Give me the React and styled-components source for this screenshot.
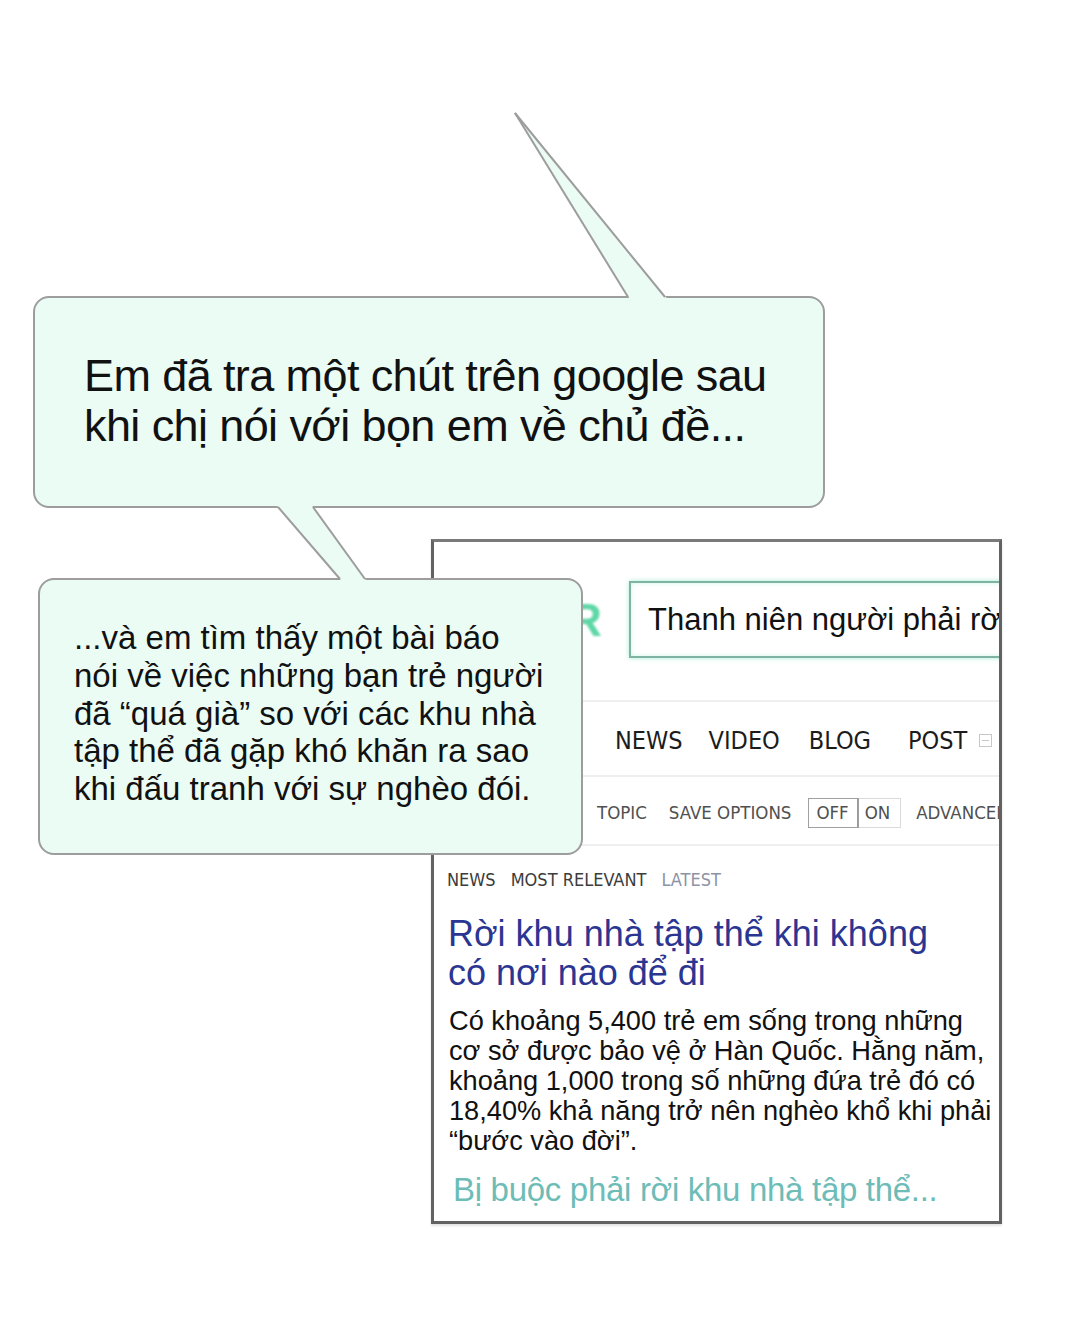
import React from 'react';
import styled, { createGlobalStyle } from 'styled-components';

const GlobalStyle = createGlobalStyle`
  body {
    margin: 0;
    background: #ffffff;
    font-family: "Liberation Sans", Arial, sans-serif;
  }
`;

const MINT = '#ebfcf4';
const LINE = '#9d9d9d';

const Page = styled.div`
  position: relative;
  width: 1080px;
  height: 1340px;
  box-sizing: border-box;
  padding-top: 296px;
  display: flex;
  flex-direction: column;
  background: #fff;
  overflow: hidden;
`;

const Bubble = styled.div`
  box-sizing: border-box;
  background: ${MINT};
  border: 2px solid ${LINE};
  border-radius: 16px;
  color: #111;
`;

const BigBubble = styled(Bubble)`
  margin-left: 33px;
  width: 792px;
  height: 212px;
  padding: 53px 0 0 49px;
`;

const BigText = styled.p`
  margin: 0;
  font-size: 45px;
  line-height: 50px;
  letter-spacing: -0.6px;
`;

const SmallBubble = styled(Bubble)`
  position: absolute;
  left: 38px;
  top: 578px;
  width: 545px;
  height: 277px;
  padding: 39px 0 0 34px;
`;

const SmallText = styled.p`
  margin: 0;
  font-size: 33px;
  line-height: 37.8px;
`;

const Tail = styled.svg`
  position: absolute;
  left: ${p => p.$x}px;
  top: ${p => p.$y}px;
  overflow: visible;
`;

const Browser = styled.div`
  box-sizing: border-box;
  margin: 31px 0 0 431px;
  width: 571px;
  height: 685px;
  border: 3px solid #626262;
  border-top-color: #7a7a7a;
  background: #fff;
  overflow: hidden;
  box-shadow: 0 2px 2px #e4e4e4;
`;

const Header = styled.div`
  height: 160px;
  box-sizing: border-box;
  padding-top: 39px;
  display: flex;
  align-items: flex-start;
  border-bottom: 2px solid #efefef;
`;

const HeaderInner = styled.div`
  display: flex;
  align-items: center;
`;

const Logo = styled.div`
  width: 168px;
  margin-right: 27px;
  text-align: right;
  font-size: 46px;
  font-weight: bold;
  color: #5fd7a7;
  filter: blur(0.8px);
`;

const Search = styled.div`
  flex-shrink: 0;
  box-sizing: border-box;
  width: 420px;
  height: 77px;
  border: 2px solid #7fb3a3;
  box-shadow: 0 0 5px #a9ecd4, inset 0 0 4px #c9f5e4;
  display: flex;
  align-items: center;
  padding-left: 17px;
  font-size: 31px;
  color: #111;
  white-space: nowrap;
`;

const Row = styled.div`
  display: flex;
  align-items: center;
  box-sizing: border-box;
  height: ${p => p.$h}px;
  padding-left: ${p => p.$pad}px;
  padding-top: 4px;
  border-bottom: ${p => (p.$line ? '2px solid #efefef' : 'none')};
  font-family: "Liberation Sans Narrow", "DejaVu Sans Condensed", sans-serif;
  white-space: nowrap;
`;

const NavItem = styled.span`
  font-size: 25px;
  color: #1c1c1c;
  margin-right: ${p => p.$gap}px;
`;

const PlusBox = styled.span`
  flex-shrink: 0;
  display: inline-block;
  width: 11px;
  height: 11px;
  border: 1px solid #c8c8c8;
  position: relative;
  &::after {
    content: '';
    position: absolute;
    left: 2px;
    right: 2px;
    top: 5px;
    height: 1px;
    background: #c8c8c8;
  }
`;

const Option = styled.span`
  font-size: 18.5px;
  color: #505050;
  margin-right: ${p => p.$gap}px;
`;

const Toggle = styled.div`
  display: flex;
  height: 28px;
  border: 1px solid #dadada;
  margin-right: 15px;
`;

const ToggleBtn = styled.span`
  display: flex;
  align-items: center;
  padding: 0 ${p => (p.$on ? 8 : 10)}px 0 7px;
  font-size: 18.5px;
  color: #505050;
  border-right: ${p => (p.$on ? '1px solid #9a9a9a' : 'none')};
  outline: ${p => (p.$on ? '1px solid #a0a0a0' : 'none')};
`;

const Results = styled.div`
  padding: 18px 0 0 13px;
`;

const Tabs = styled.div`
  display: flex;
  height: 30px;
  align-items: center;
  font-family: "Liberation Sans Narrow", "DejaVu Sans Condensed", sans-serif;
  font-size: 18px;
  white-space: nowrap;
`;

const Tab = styled.span`
  color: ${p => (p.$muted ? '#8d93a6' : '#3c3c3c')};
  margin-right: 15px;
`;

const Title = styled.h2`
  margin: 20px 0 0 1px;
  font-weight: normal;
  font-size: 36px;
  line-height: 39px;
  color: #2b3592;
`;

const Body = styled.p`
  margin: 14px 0 0 2px;
  font-size: 27.2px;
  line-height: 30px;
  color: #111;
  white-space: nowrap;
`;

const More = styled.div`
  margin: 16px 0 0 6px;
  font-size: 33px;
  line-height: 36px;
  color: #6dbcb7;
  letter-spacing: -0.3px;
  white-space: nowrap;
`;

export default function App() {
  return (
    <>
      <GlobalStyle />
      <Page>
        <BigBubble>
          <BigText>
            Em đã tra một chút trên google sau
            <br />
            khi chị nói với bọn em về chủ đề...
          </BigText>
        </BigBubble>

        <Browser>
          <Header>
            <HeaderInner>
              <Logo>R</Logo>
              <Search>Thanh niên người phải rời khu nhà tập thể</Search>
            </HeaderInner>
          </Header>

          <Row $h={75} $pad={181} $line>
            <NavItem $gap={26}>NEWS</NavItem>
            <NavItem $gap={29}>VIDEO</NavItem>
            <NavItem $gap={37}>BLOG</NavItem>
            <NavItem $gap={12}>POST</NavItem>
            <PlusBox />
          </Row>

          <Row $h={69} $pad={163} $line>
            <Option $gap={22}>TOPIC</Option>
            <Option $gap={17}>SAVE OPTIONS</Option>
            <Toggle>
              <ToggleBtn $on>OFF</ToggleBtn>
              <ToggleBtn>ON</ToggleBtn>
            </Toggle>
            <Option $gap={0}>ADVANCED</Option>
          </Row>

          <Results>
            <Tabs>
              <Tab>NEWS</Tab>
              <Tab>MOST RELEVANT</Tab>
              <Tab $muted>LATEST</Tab>
            </Tabs>
            <Title>
              Rời khu nhà tập thể khi không
              <br />
              có nơi nào để đi
            </Title>
            <Body>
              Có khoảng 5,400 trẻ em sống trong những
              <br />
              cơ sở được bảo vệ ở Hàn Quốc. Hằng năm,
              <br />
              khoảng 1,000 trong số những đứa trẻ đó có
              <br />
              18,40% khả năng trở nên nghèo khổ khi phải
              <br />
              “bước vào đời”.
            </Body>
            <More>Bị buộc phải rời khu nhà tập thể...</More>
          </Results>
        </Browser>

        <SmallBubble>
          <SmallText>
            ...và em tìm thấy một bài báo
            <br />
            nói về việc những bạn trẻ người
            <br />
            đã “quá già” so với các khu nhà
            <br />
            tập thể đã gặp khó khăn ra sao
            <br />
            khi đấu tranh với sự nghèo đói.
          </SmallText>
        </SmallBubble>

        <Tail $x={505} $y={105} width="170" height="200" viewBox="0 0 170 200">
          <polygon points="10,8 126,196 164,196" fill={MINT} />
          <line x1="10" y1="8" x2="123" y2="192" stroke={LINE} strokeWidth="2" />
          <line x1="10" y1="8" x2="160" y2="192" stroke={LINE} strokeWidth="2" />
        </Tail>

        <Tail $x={270} $y={500} width="105" height="86" viewBox="0 0 105 86">
          <polygon points="4.6,3 40.1,3 97.9,83 73.4,83" fill={MINT} />
          <line x1="8" y1="7" x2="70" y2="79" stroke={LINE} strokeWidth="2" />
          <line x1="43" y1="7" x2="95" y2="79" stroke={LINE} strokeWidth="2" />
        </Tail>
      </Page>
    </>
  );
}
